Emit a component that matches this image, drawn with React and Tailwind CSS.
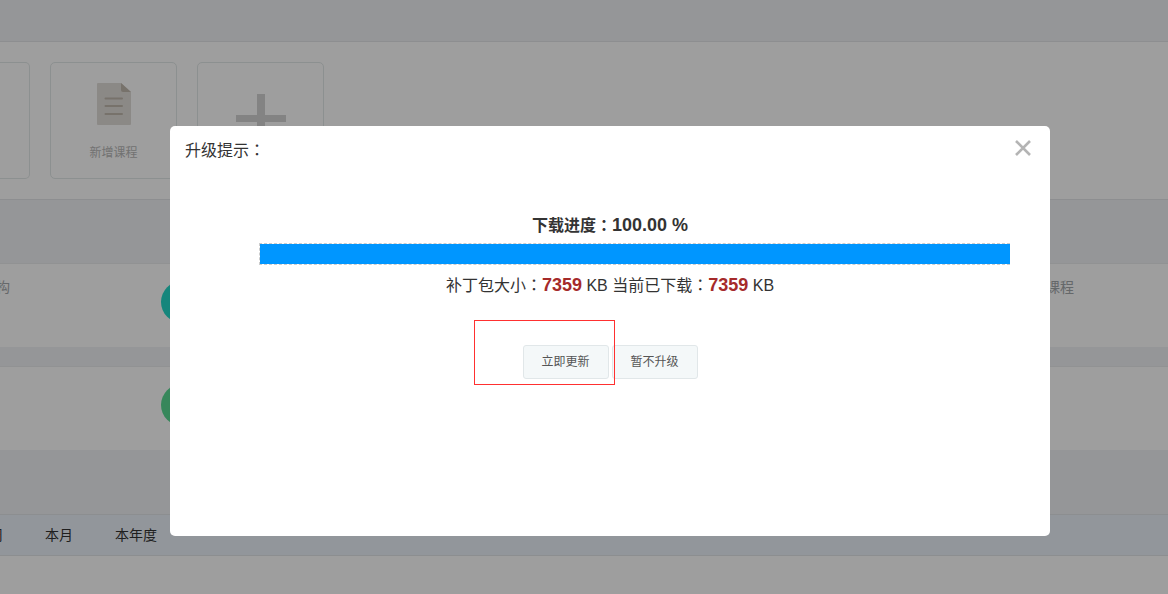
import React, { useState } from 'react';

const TABS = ['周', '本月', '本年度'];

// Full-width colon, centred in its box
const Colon = () => <span className="font-['Noto_Sans_CJK_TC',sans-serif]">：</span>;

const DocumentIcon = () => (
  <svg width="34" height="42" viewBox="0 0 34 42" aria-hidden="true">
    <path d="M1 0H24L34 9V41a1 1 0 0 1-1 1H1a1 1 0 0 1-1-1V1a1 1 0 0 1 1-1Z" fill="#e0ddd8" />
    <path d="M24 0L34 9H26a2 2 0 0 1-2-2Z" fill="#c0b8ad" />
    <path d="M8.500 15.500H25M8.500 23H25M8.500 31H25" stroke="#c0b8ad" strokeWidth="2" strokeLinecap="round" />
  </svg>
);

const PlusIcon = () => (
  <svg width="50" height="50" viewBox="0 0 50 50" aria-hidden="true">
    <path d="M21 0H29V21H50V28H29V50H21V28H0V21H21Z" fill="#d4d4d4" />
  </svg>
);

const CloseIcon = () => (
  <svg width="16" height="16" viewBox="0 0 16 16" aria-hidden="true">
    <path d="M1 1L15 15M15 1L1 15" stroke="#b4b4b4" strokeWidth="2.600" />
  </svg>
);

const DialogButton = ({ children, onClick }) => (
  <button
    type="button"
    onClick={onClick}
    className="h-[34px] w-[86px] rounded-[3px] border border-[#e1e7e9] bg-[#f4f8f9] text-xs text-[#555]"
  >
    {children}
  </button>
);

const Shortcuts = () => (
  <section className="flex h-[159px] gap-5 border-y border-[#e4e6e8] bg-white pt-5">
    <div className="h-[117px] w-[30px] rounded-r-[5px] border border-l-0 border-[#e2e8e8]" />
    <button
      type="button"
      className="flex h-[117px] w-[127px] flex-col items-center rounded-[5px] border border-[#e2e8e8] pt-5 text-xs text-[#b8b8b8]"
    >
      <DocumentIcon />
      <span className="mt-5">新增课程</span>
    </button>
    <button
      type="button"
      aria-label="+"
      className="flex h-[117px] w-[127px] justify-center rounded-[5px] border border-[#e2e8e8] pt-[31px]"
    >
      <PlusIcon />
    </button>
  </section>
);

const StatRow = ({ left, right, dot }) => (
  <section className="flex h-[84px] justify-between border-t border-[#ebecee] bg-white pt-[17px] pr-[94px] text-sm leading-3 text-[#a4a8ab]">
    <div className="flex">
      <span className="-ml-1 w-[165px]">{left}</span>
      <span className={`h-[42px] w-[42px] rounded-full ${dot}`} />
    </div>
    <span>{right}</span>
  </section>
);

const UpgradeDialog = ({ percent, total, loaded, onClose }) => (
  <div
    role="dialog"
    aria-labelledby="upgrade-title"
    className="h-[410px] w-[880px] rounded-[5px] bg-white text-base text-[#333]"
  >
    <header className="flex h-[34px] items-start justify-between pt-[14px] pr-[19px] pl-[15px]">
      <h2 id="upgrade-title" className="leading-[18px]">升级提示<Colon /></h2>
      <button type="button" aria-label="×" onClick={onClose}>
        <CloseIcon />
      </button>
    </header>

    {/* Download progress */}
    <div className="pt-[54px] text-center">
      <p className="h-5 font-bold leading-5">
        下载进度<Colon />
        <span className="text-lg leading-5">{percent.toFixed(2)} %</span>
      </p>
      <div className="mt-[9px] mr-10 ml-[89px] border border-r-0 border-dashed border-[#ccc]">
        <div className="h-5 bg-[#0096ff]" style={{ width: `${percent}%` }} />
      </div>
      <p className="mt-[9px] h-5 leading-5">
        补丁包大小<Colon />
        <b className="text-lg leading-5 text-[#a52a2a]">{total}</b> KB 当前已下载<Colon />
        <b className="text-lg leading-5 text-[#a52a2a]">{loaded}</b> KB
      </p>
    </div>

    {/* Actions */}
    <div className="mt-[51px] flex justify-center">
      <div className="relative flex gap-[3px]">
        <DialogButton>立即更新</DialogButton>
        <DialogButton onClick={onClose}>暂不升级</DialogButton>
        <div className="pointer-events-none absolute -top-[25px] -left-[49px] h-[65px] w-[141px] border border-[#ff3030]" />
      </div>
    </div>
  </div>
);

export default function App() {
  const [open, setOpen] = useState(true);

  return (
    <div className="min-h-screen overflow-hidden bg-white font-['Liberation_Sans','Noto_Sans_CJK_SC',sans-serif]">
      <main className="bg-[#f0f2f5]">
        <div className="h-[41px]" />
        <Shortcuts />
        <div className="mt-[63px]">
          <StatRow left="构" right="课程" dot="bg-[#25d8c8]" />
        </div>
        <div className="mt-[19px]">
          <StatRow dot="bg-[#5ada94]" />
        </div>
        <nav className="mt-16 flex h-[42px] items-center gap-[42px] border-y border-[#e2e5e8] bg-[#ecf2fa] text-sm text-[#333]">
          {TABS.map((tab, index) => (
            <a key={tab} href="#" className={index === 0 ? '-ml-[11px]' : ''}>{tab}</a>
          ))}
        </nav>
      </main>

      {open && (
        <div className="fixed inset-0 flex items-start justify-center bg-black/38 pt-[126px] pl-[52px]">
          <UpgradeDialog percent={100} total={7359} loaded={7359} onClose={() => setOpen(false)} />
        </div>
      )}
    </div>
  );
}
